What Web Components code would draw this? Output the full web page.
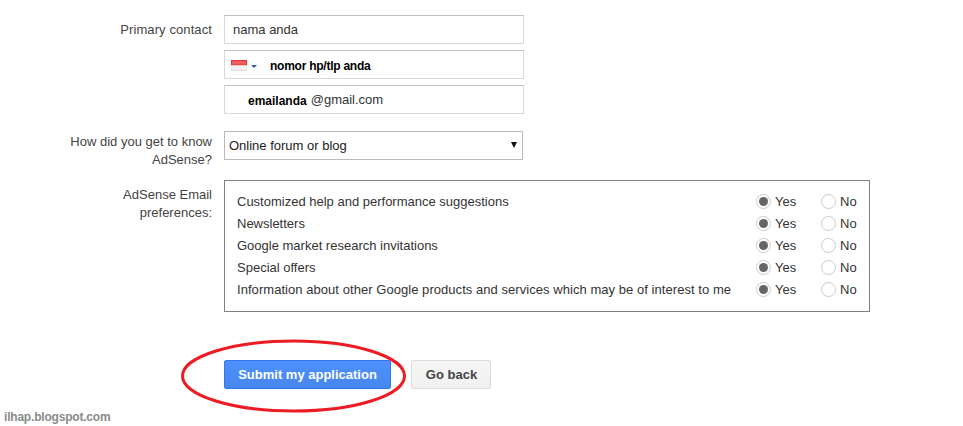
<!DOCTYPE html>
<html>
<head>
<meta charset="utf-8">
<title>AdSense application</title>
<style>
  html, body { margin: 0; background: #fff; }
  body {
    width: 963px;
    height: 426px;
    overflow: hidden;
    position: relative;
    font-family: "Liberation Sans", Arial, sans-serif;
    font-size: 13px;
    color: #333;
  }
  .page { padding-top: 15px; }
  b { color: #000; font-size: 12px; padding-top: 2px; }
</style>
</head>
<body>
<div class="page">
  <form-row label="Primary contact">
    <text-field><span>nama anda</span></text-field>
    <text-field gap>
      <flag-picker></flag-picker>
      <b style="margin-left:13px;letter-spacing:-0.25px">nomor hp/tlp anda</b>
    </text-field>
    <text-field gap>
      <b style="margin-left:15px;margin-right:4px">emailanda</b><span>@gmail.com</span>
    </text-field>
  </form-row>

  <form-row label="How did you get to know AdSense?" style="margin-top:17px;--label-pad:2px;--label-track:0">
    <select-field>Online forum or blog</select-field>
  </form-row>

  <form-row label="AdSense Email preferences:" style="margin-top:11px;--label-track:0">
    <pref-box>
      <pref-row>Customized help and performance suggestions</pref-row>
      <pref-row>Newsletters</pref-row>
      <pref-row>Google market research invitations</pref-row>
      <pref-row>Special offers</pref-row>
      <pref-row style="letter-spacing:0.05px">Information about other Google products and services which may be of interest to me</pref-row>
    </pref-box>
  </form-row>

  <form-row style="margin-top:48px">
    <div style="display:flex;gap:20px">
      <g-button primary style="width:167px">Submit my application</g-button>
      <g-button style="width:80px;padding-left:1px">Go back</g-button>
    </div>
  </form-row>
</div>

<red-circle></red-circle>
<water-mark>ilhap.blogspot.com</water-mark>

<script>
class FormRow extends HTMLElement {
    constructor() {
        super();
        this.attachShadow({ mode: 'open' });
        const label = this.getAttribute('label') || '';
        this.shadowRoot.innerHTML = `
        <style>
            :host { display: grid; grid-template-columns: 212px 646px; column-gap: 12px; }
            .label {
                box-sizing: border-box;
                padding: var(--label-pad, 6px) 0 0 58px;
                text-align: right;
                line-height: 18px;
                color: #444;
                letter-spacing: var(--label-track, 0.1px);
            }
        </style>
        <div class="label">${label}</div>
        <div><slot></slot></div>
        `;
    }
}

class TextField extends HTMLElement {
    constructor() {
        super();
        this.attachShadow({ mode: 'open' });
        this.shadowRoot.innerHTML = `
        <style>
            :host {
                display: flex;
                align-items: center;
                box-sizing: border-box;
                width: 300px;
                height: 29px;
                padding: 0 8px;
                background: #fff;
                border: 1px solid #d9d9d9;
                border-top-color: #c0c0c0;
                color: #333;
                white-space: nowrap;
            }
            :host([gap]) { margin-top: 6px; }
        </style>
        <slot></slot>
        `;
    }
}

class FlagPicker extends HTMLElement {
    constructor() {
        super();
        this.attachShadow({ mode: 'open' });
        this.shadowRoot.innerHTML = `
        <style>
            :host { display: inline-flex; align-items: center; gap: 4px; margin: 2px 0 0 -2px; }
            .flag { display: block; width: 16px; height: 11px; }
            .caret { width: 0; height: 0; border: 3px solid transparent; border-top: 3px solid #3b5998; border-bottom: 0; margin-top: 1px; }
        </style>
        <svg class="flag" viewBox="0 0 16 11">
            <rect width="16" height="5.5" fill="#e0322f"/>
            <rect x="1" y="1" width="14" height="3.5" fill="#ee6060"/>
            <rect y="5.5" width="16" height="5.5" fill="#f0f0f0"/>
            <rect x="0" y="10" width="16" height="1" fill="#dedede"/>
        </svg>
        <div class="caret"></div>
        `;
    }
}

class SelectField extends HTMLElement {
    constructor() {
        super();
        this.attachShadow({ mode: 'open' });
        this.shadowRoot.innerHTML = `
        <style>
            :host {
                display: flex;
                align-items: center;
                justify-content: space-between;
                box-sizing: border-box;
                width: 299px;
                height: 29px;
                padding: 0 5px 0 4px;
                border: 1px solid #bbb;
                color: #222;
            }
            .arrow { width: 0; height: 0; border: 3.5px solid transparent; border-top: 6px solid #111; border-bottom: 0; margin-top: -2px; }
        </style>
        <span><slot></slot></span>
        <div class="arrow"></div>
        `;
    }
}

class PrefBox extends HTMLElement {
    constructor() {
        super();
        this.attachShadow({ mode: 'open' });
        this.shadowRoot.innerHTML = `
        <style>
            :host {
                display: block;
                box-sizing: border-box;
                width: 646px;
                height: 132px;
                padding: 9px 0 0 12px;
                border: 1px solid #808080;
            }
        </style>
        <slot></slot>
        `;
    }
}

class PrefRow extends HTMLElement {
    constructor() {
        super();
        this.attachShadow({ mode: 'open' });
        this.shadowRoot.innerHTML = `
        <style>
            :host { display: flex; align-items: center; height: 22px; color: #333; }
            .text { flex: none; width: 519px; white-space: nowrap; }
            .opt { flex: none; display: flex; align-items: center; gap: 4px; width: 65px; letter-spacing: 0; }
            .radio {
                box-sizing: border-box;
                width: 15px;
                height: 15px;
                border-radius: 50%;
                border: 1px solid #ccc;
                background: #fff;
                display: flex;
                align-items: center;
                justify-content: center;
            }
            .dot { width: 9px; height: 9px; border-radius: 50%; background: #666; }
        </style>
        <div class="text"><slot></slot></div>
        <div class="opt"><div class="radio"><div class="dot"></div></div><span>Yes</span></div>
        <div class="opt"><div class="radio"></div><span>No</span></div>
        `;
    }
}

class GButton extends HTMLElement {
    constructor() {
        super();
        this.attachShadow({ mode: 'open' });
        this.shadowRoot.innerHTML = `
        <style>
            :host {
                display: inline-flex;
                align-items: center;
                justify-content: center;
                box-sizing: border-box;
                height: 29px;
                border: 1px solid #dcdcdc;
                border-radius: 2px;
                background: linear-gradient(#f5f5f5, #f1f1f1);
                color: #444;
                font-weight: bold;
                white-space: nowrap;
            }
            :host([primary]) {
                border-color: #3079ed;
                background: linear-gradient(#4d90fe, #4787ed);
                color: #fff;
            }
        </style>
        <slot></slot>
        `;
    }
}

// hand-drawn marker ring, lies over the form
class RedCircle extends HTMLElement {
    constructor() {
        super();
        this.attachShadow({ mode: 'open' });
        this.shadowRoot.innerHTML = `
        <style>
            :host { position: absolute; left: 178px; top: 336px; display: block; width: 232px; height: 80px; }
            svg { display: block; }
        </style>
        <svg width="232" height="80" viewBox="0 0 232 80">
            <ellipse cx="115.5" cy="40" rx="111" ry="35" fill="none" stroke="#ed1c24" stroke-width="3"/>
        </svg>
        `;
    }
}

class WaterMark extends HTMLElement {
    constructor() {
        super();
        this.attachShadow({ mode: 'open' });
        this.shadowRoot.innerHTML = `
        <style>
            :host { position: absolute; left: 4px; top: 410px; display: block; font-size: 12px; letter-spacing: -0.2px; font-weight: bold; line-height: 14px; color: #8a8a8a; }
        </style>
        <slot></slot>
        `;
    }
}

customElements.define('form-row', FormRow);
customElements.define('text-field', TextField);
customElements.define('flag-picker', FlagPicker);
customElements.define('select-field', SelectField);
customElements.define('pref-box', PrefBox);
customElements.define('pref-row', PrefRow);
customElements.define('g-button', GButton);
customElements.define('red-circle', RedCircle);
customElements.define('water-mark', WaterMark);
</script>
</body>
</html>
